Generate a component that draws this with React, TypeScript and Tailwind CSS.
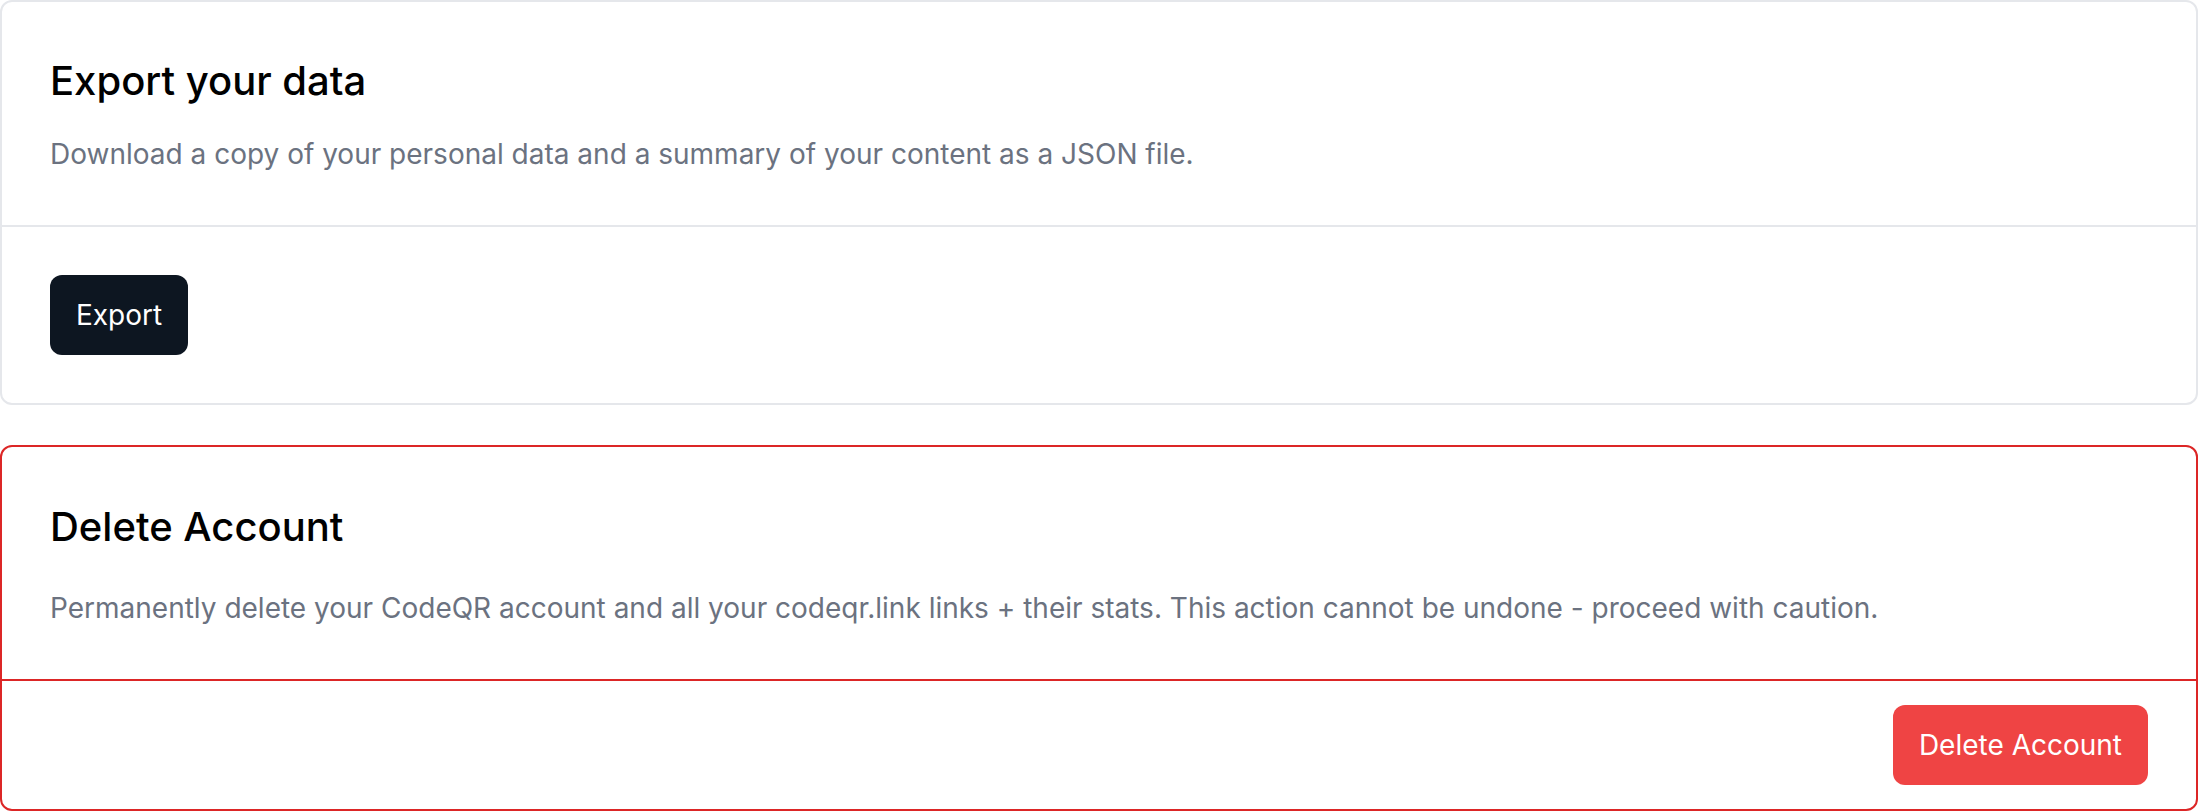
export default function App() {
  return (
    <div className="flex w-full flex-col gap-[40px] bg-white font-['Inter',sans-serif]">
      <section className="flex flex-col rounded-[12px] border-2 border-[#e5e7eb] bg-white">
        <div className="flex flex-col border-b-2 border-[#e5e7eb] px-[48px] pb-[51px] pt-[51px]">
          <h2 className="text-[40px] font-medium leading-[56px] text-black">Export your data</h2>
          <p className="mt-[25px] text-[28px] leading-[40px] text-[#6b7280]">
            Download a copy of your personal data and a summary of your content as a JSON file.
          </p>
        </div>
        <div className="flex items-center p-[48px]">
          <button
            type="button"
            className="h-[80px] rounded-[12px] bg-[#0d1621] px-[26px] text-[28px] text-white"
          >
            Export
          </button>
        </div>
      </section>

      <section className="flex flex-col rounded-[12px] border-2 border-[#dc2626] bg-white">
        <div className="flex flex-col border-b-2 border-[#dc2626] px-[48px] pb-[51px] pt-[52px]">
          <h2 className="text-[40px] font-medium leading-[56px] text-black">Delete Account</h2>
          <p className="mt-[33px] text-[28px] leading-[40px] text-[#6b7280]">
            Permanently delete your CodeQR account and all your codeqr.link links + their stats. This action
            cannot be undone - proceed with caution.
          </p>
        </div>
        <div className="flex items-center justify-end px-[48px] py-[24px]">
          <button
            type="button"
            className="h-[80px] rounded-[12px] bg-[#ef4444] px-[26px] text-[28px] text-white"
          >
            Delete Account
          </button>
        </div>
      </section>
    </div>
  )
}
